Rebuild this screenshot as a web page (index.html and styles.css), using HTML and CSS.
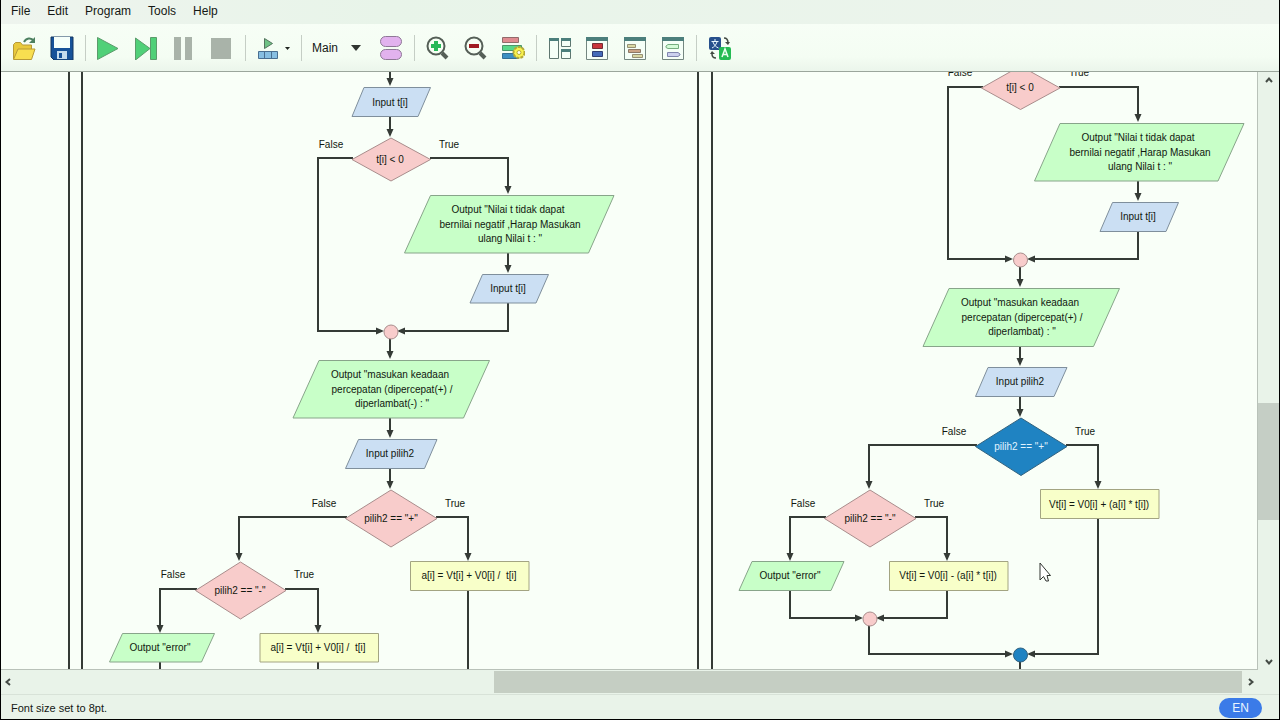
FILE: index.html
```html
<!DOCTYPE html>
<html lang="en">
<head>
<meta charset="utf-8">
<title>Flowchart editor</title>
<link rel="stylesheet" href="styles.css">
</head>
<body>
<div class="app">
  <nav class="menubar">
    <button class="menu">File</button>
    <button class="menu">Edit</button>
    <button class="menu">Program</button>
    <button class="menu">Tools</button>
    <button class="menu">Help</button>
  </nav>

  <div class="toolbar">
    <div class="group">
      <button class="tool" aria-label="Open"><svg viewBox="0 0 24 24"><path d="M1.500 23V8.500l2-2h5l2 2.500h9V14" fill="#e8c93c" stroke="#b89a36"/><path d="M1.500 23.500L6 13h17l-3.500 10.500z" fill="#f8df50" stroke="#b89a36"/><path d="M12 6c2-4 7-5 10-1" fill="none" stroke="#4d8060" stroke-width="2"/><path d="M23 1v6h-6z" fill="#4d8060"/></svg></button>
      <button class="tool" aria-label="Save"><svg viewBox="0 0 24 24"><path d="M1 1h22v23H4l-3-3z" fill="#175299" stroke="#12355f"/><path d="M4 1h16v11H4z" fill="#f6fffa"/><path d="M7 15h10v8H7z" fill="#c5dced"/><path d="M9 17h3v5H9z" fill="#175299"/></svg></button>
    </div>
    <span class="sep"></span>
    <div class="group">
      <button class="tool" aria-label="Run"><svg viewBox="0 0 24 24"><path d="M1.500 1.500v22L22 12.500z" fill="#50d078" stroke="#5b9b6b"/></svg></button>
      <button class="tool" aria-label="Step"><svg viewBox="0 0 24 24"><path d="M1.500 2v22L16 12.500z" fill="#50d078" stroke="#5b9b6b"/><path d="M16.500 1.500h6v22h-6z" fill="#50d078" stroke="#5b9b6b"/></svg></button>
      <button class="tool" aria-label="Pause"><svg viewBox="0 0 24 24"><path d="M2 1h7v23H2zM13 1h7v23h-7z" fill="#a9b3a9"/></svg></button>
      <button class="tool" aria-label="Stop"><svg viewBox="0 0 24 24"><path d="M1 2h20v21H1z" fill="#a9b3a9"/></svg></button>
    </div>
    <span class="sep"></span>
    <button class="tool wide" aria-label="Run speed"><svg viewBox="0 0 34 24"><path d="M8.500 2.500v10l8-5z" fill="#6fc285" stroke="#55745e"/><path d="M2.500 15.500h19v7h-19zM8.500 16v6M15.500 16v6" fill="#87bfe2" stroke="#496f91"/><path d="M29 11h5l-2.500 3z" fill="#202420"/></svg></button>
    <span class="sep"></span>
    <label class="picker">
      <select aria-label="Function"><option>Main</option></select>
      <svg class="picker-arrow" viewBox="0 0 10 6"><path d="M0 0h10L5 6z" fill="#303530"/></svg>
    </label>
    <button class="tool" aria-label="Functions"><svg viewBox="0 0 24 24"><rect x="1.500" y="0.500" width="21" height="10" rx="5" fill="#e2b2ee" stroke="#8e7896"/><rect x="1.500" y="13.500" width="21" height="10" rx="5" fill="#e2b2ee" stroke="#8e7896"/></svg></button>
    <span class="sep"></span>
    <div class="group">
      <button class="tool" aria-label="Zoom in"><svg viewBox="0 0 24 24"><path d="M17 17l5 5" stroke="#555f57" stroke-width="4"/><circle cx="11" cy="10" r="8.500" fill="#f6fff4" stroke="#555f57" stroke-width="2"/><path d="M11 5v10M6 10h10" stroke="#28b958" stroke-width="4"/></svg></button>
      <button class="tool" aria-label="Zoom out"><svg viewBox="0 0 24 24"><path d="M17 17l5 5" stroke="#555f57" stroke-width="4"/><circle cx="11" cy="10" r="8.500" fill="#f6fff4" stroke="#555f57" stroke-width="2"/><path d="M6 10h10" stroke="#a01c22" stroke-width="4"/></svg></button>
      <button class="tool" aria-label="Layout settings"><svg viewBox="0 0 24 24"><path d="M1.500 1.500h16v5h-16z" fill="#df8b90" stroke="#926a6a"/><path d="M1.500 9.500h19v5h-19z" fill="#59d78a" stroke="#4c966a"/><path d="M1.500 17.500h16v5h-16z" fill="#3c8ec2" stroke="#356d94"/><circle cx="18" cy="16.500" r="5.500" fill="#f9f34e" stroke="#b5a936" stroke-width="2" stroke-dasharray="3 1"/><circle cx="18" cy="16.500" r="2" fill="#fffef0" stroke="#b5a936"/></svg></button>
    </div>
    <span class="sep"></span>
    <div class="group">
      <button class="tool" aria-label="Panels"><svg viewBox="0 0 24 24"><path d="M2.500 2.500h9v20h-9zM14.500 2.500h9v8h-9zM14.500 13.500h9v9h-9z" fill="#f5fff7" stroke="#5f7770"/><path d="M2 2h10v3H2zM14 2h10v3H14zM14 13h10v3H14z" fill="#4c7f7c"/></svg></button>
      <button class="tool" aria-label="Variables"><svg viewBox="0 0 24 24"><path d="M1.500 1.500h21v22h-21z" fill="#f5fff7" stroke="#748780"/><path d="M1 1h22v4H1z" fill="#4c7f7c"/><path d="M7.500 7.500h10v5h-10z" fill="#c9343b" stroke="#752e35"/><path d="M7.500 15.500h10v5h-10z" fill="#456bb9" stroke="#303f75"/></svg></button>
      <button class="tool" aria-label="Source code"><svg viewBox="0 0 24 24"><path d="M1.500 1.500h21v22h-21z" fill="#f5fff7" stroke="#748780"/><path d="M1 1h22v4H1z" fill="#4c7f7c"/><path d="M4.500 8.500h8v3h-8z" fill="#d9d8a3" stroke="#969075"/><path d="M5.500 13.500h12v3h-12z" fill="#cca486" stroke="#8d7967"/><path d="M9.500 18.500h10v3h-10z" fill="#d9d8a3" stroke="#969075"/></svg></button>
      <button class="tool" aria-label="Console"><svg viewBox="0 0 24 24"><path d="M1.500 1.500h21v22h-21z" fill="#f5fff7" stroke="#748780"/><path d="M1 1h22v4H1z" fill="#4c7f7c"/><path d="M5 10l2-1.500h10.500v4H7L5 11.500z" fill="#d5fbd8" stroke="#76ad7f"/><path d="M6.500 16.500H17l2 1.500v1l-2 1.500H6.500z" fill="#cbd0ee" stroke="#8085ae"/></svg></button>
    </div>
    <span class="sep"></span>
    <button class="tool" aria-label="Language"><svg viewBox="0 0 24 24"><rect x="2" y="1" width="12" height="13" rx="2" fill="#27508c"/><path d="M8 3v2M4.500 5.500h7M10 6c-1 3-3 5-5 6M6 6c1 3 3 5 5.500 6" fill="none" stroke="#eaf8ff"/><rect x="12" y="11" width="12" height="13" rx="2" fill="#25bb54"/><path d="M15 21l3-8 3 8M16 18.500h4" fill="none" stroke="#eafff0" stroke-width="1.500"/><path d="M17 2c3 0 4 2 4 5M9 22c-3 0-4-1-4-4" fill="none" stroke="#414941" stroke-width="1.500"/><path d="M18 6h5l-2 3zM3 18l2-3 3 3z" fill="#414941"/></svg></button>
  </div>

  <main class="workspace">
    <svg class="chart" role="img" aria-label="Program flowchart">
      <defs>
        <marker id="head" markerUnits="userSpaceOnUse" markerWidth="8" markerHeight="8" refX="6" refY="4" orient="auto"><path d="M0 0.500L8 4L0 7.500z" fill="#353b36"/></marker>
      </defs>
      <g transform="translate(-1 -72)">
        <path class="wire" d="M69 60V680M82 60V680M698 60V680M712 60V680"/>

        <g class="wire flow">
          <path d="M390 60V84"/>
          <path d="M390 117V135"/>
          <path d="M353 158H318V331H382"/>
          <path d="M430 158H508V192"/>
          <path d="M508 253V271"/>
          <path d="M508 303V331H399"/>
          <path d="M390 338V357"/>
          <path d="M390 418V436"/>
          <path d="M390 468V487"/>
          <path d="M347 517H239V559"/>
          <path d="M436 517H468V559"/>
          <path d="M197 589H160V631"/>
          <path d="M285 589H318V631"/>
        </g>
        <path class="wire" d="M160 662V680M318 662V680M468 590V680"/>

        <path class="input" d="M364 87.500H430.500L418 116.500H352z"/>
        <path class="decision" d="M352 159.500L391 138L430.500 159.500L391 181z"/>
        <path class="output" d="M430.500 195.500H614L588.500 253H404.500z"/>
        <path class="input" d="M482.500 274.500H548.500L536 303H470z"/>
        <circle class="decision" cx="391" cy="332" r="7"/>
        <path class="output" d="M319 360.500H489.500L463.500 418H293z"/>
        <path class="input" d="M358.500 439.500H437L424.500 468.500H345.500z"/>
        <path class="decision" d="M345.500 518.500L391 490L437 518.500L391 547z"/>
        <path class="decision" d="M195.500 590.500L240.500 562L286 590.500L240.500 619z"/>
        <path class="assign" d="M410.500 561.500h118.500v29h-118.500z"/>
        <path class="assign" d="M260 633.500h118.500v28.500h-118.500z"/>
        <path class="output" d="M122.500 633.500H214.500L201.500 662H109.500z"/>

        <text x="390" y="106">Input t[i]</text>
        <text x="331" y="148">False</text>
        <text x="449" y="148">True</text>
        <text x="390" y="163">t[i] &lt; 0</text>
        <text x="508" y="213">Output "Nilai t tidak dapat</text>
        <text x="510" y="228">bernilai negatif ,Harap Masukan</text>
        <text x="510" y="242">ulang Nilai t : "</text>
        <text x="508" y="292">Input t[i]</text>
        <text x="390" y="378">Output "masukan keadaan</text>
        <text x="392" y="393">percepatan (dipercepat(+) /</text>
        <text x="392" y="407">diperlambat(-) : "</text>
        <text x="390" y="457">Input pilih2</text>
        <text x="324" y="507">False</text>
        <text x="455" y="507">True</text>
        <text x="391" y="522">pilih2 == "+"</text>
        <text x="469" y="579" xml:space="preserve">a[i] = Vt[i] + V0[i] /  t[i]</text>
        <text x="173" y="578">False</text>
        <text x="304" y="578">True</text>
        <text x="240" y="594">pilih2 == "-"</text>
        <text x="160" y="651">Output "error"</text>
        <text x="318" y="651" xml:space="preserve">a[i] = Vt[i] + V0[i] /  t[i]</text>

        <g class="wire flow">
          <path d="M983 87H948V259H1011"/>
          <path d="M1059 87H1138V120"/>
          <path d="M1138 181V199"/>
          <path d="M1138 231V259H1029"/>
          <path d="M1020 266V285"/>
          <path d="M1020 346V364"/>
          <path d="M1020 396V415"/>
          <path d="M977 445H869V487"/>
          <path d="M1066 445H1098V487"/>
          <path d="M826 517H790V559"/>
          <path d="M915 517H947V559"/>
          <path d="M790 590V618H861"/>
          <path d="M947 590V618H878"/>
          <path d="M869 625V654H1011"/>
          <path d="M1098 518V654H1029"/>
        </g>
        <path class="wire" d="M1020 661V680"/>

        <path class="decision" d="M981.500 88L1020.500 66L1060 88L1020.500 109.500z"/>
        <path class="output" d="M1060 123.500H1244L1218 181H1034.500z"/>
        <path class="input" d="M1112.500 202.500H1178.500L1166 231.500H1100z"/>
        <circle class="decision" cx="1020.500" cy="260" r="7"/>
        <path class="output" d="M949 288.500H1119.500L1093.500 346.500H923z"/>
        <path class="input" d="M988 367.500H1067L1054 396.500H975.500z"/>
        <path class="current" d="M975.500 446.500L1021 418L1067 446.500L1021 475.500z"/>
        <path class="decision" d="M824.500 518.500L870 490L916 518.500L870 547z"/>
        <path class="assign" d="M1040.500 489.500h118.500v29h-118.500z"/>
        <path class="output" d="M752 561.500H844L831 590.500H739z"/>
        <path class="assign" d="M889.500 561.500h118.500v29h-118.500z"/>
        <circle class="decision" cx="870" cy="619" r="7"/>
        <circle class="current" cx="1020.500" cy="655" r="7"/>

        <text x="960" y="76">False</text>
        <text x="1079" y="76">True</text>
        <text x="1020" y="91">t[i] &lt; 0</text>
        <text x="1138" y="141">Output "Nilai t tidak dapat</text>
        <text x="1140" y="156">bernilai negatif ,Harap Masukan</text>
        <text x="1140" y="170">ulang Nilai t : "</text>
        <text x="1138" y="220">Input t[i]</text>
        <text x="1020" y="306">Output "masukan keadaan</text>
        <text x="1022" y="321">percepatan (dipercepat(+) /</text>
        <text x="1022" y="335">diperlambat) : "</text>
        <text x="1020" y="385">Input pilih2</text>
        <text x="954" y="435">False</text>
        <text x="1085" y="435">True</text>
        <text class="on-current" x="1021" y="450">pilih2 == "+"</text>
        <text x="803" y="507">False</text>
        <text x="934" y="507">True</text>
        <text x="870" y="522">pilih2 == "-"</text>
        <text x="1099" y="508">Vt[i] = V0[i] + (a[i] * t[i])</text>
        <text x="790" y="579">Output "error"</text>
        <text x="948" y="579">Vt[i] = V0[i] - (a[i] * t[i])</text>

        <path class="cursor" d="M1040 563V580L1043.500 576.500L1046 581H1048.500L1047 575.500H1050.500z"/>
      </g>
    </svg>
    <div class="vbar">
      <button class="arrow" aria-label="Scroll up"><svg viewBox="0 0 8 8"><path d="M1 6l3-3.500L7 6"/></svg></button>
      <div class="track"><div class="thumb"></div></div>
      <button class="arrow" aria-label="Scroll down"><svg viewBox="0 0 8 8"><path d="M1 2l3 3.500L7 2"/></svg></button>
    </div>
    <div class="hbar">
      <button class="arrow" aria-label="Scroll left"><svg viewBox="0 0 8 8"><path d="M6 1L2.500 4L6 7"/></svg></button>
      <div class="track"><div class="thumb"></div></div>
      <button class="arrow" aria-label="Scroll right"><svg viewBox="0 0 8 8"><path d="M2 1l3.500 3L2 7"/></svg></button>
    </div>
  </main>

  <footer class="status">
    <span>Font size set to 8pt.</span>
    <button class="lang">EN</button>
  </footer>
</div>
</body>
</html>
```
FILE: styles.css
```css
* { box-sizing: border-box; }

body {
  margin: 0;
  font: 12px/16px "Liberation Sans", Arial, sans-serif;
  color: #141814;
}

button, select {
  font: inherit;
  color: inherit;
  background: none;
  border: 0;
  margin: 0;
  padding: 0;
}

svg { display: block; }

.app {
  display: grid;
  grid-template-rows: auto auto 1fr auto;
  height: 100vh;
  border: 1px solid #000;
  border-top: 0;
  background: #e9f3e9;
}

.menubar {
  display: flex;
  gap: 17px;
  padding: 3px 10px 5px;
  background: linear-gradient(90deg, #eef4ee, #e8f4e9 30%, #edf4ed);
}

.toolbar {
  display: flex;
  align-items: center;
  height: 48px;
  padding: 0 11px;
  background: linear-gradient(#f7fef6, #f4fdf3 70%, #ebf5eb);
  border-bottom: 1px solid #9ba69c;
}

.group { display: flex; gap: 14px; }

.tool { width: 24px; height: 24px; }

.tool.wide { width: 34px; }

.tool svg { width: 100%; height: 24px; }

.sep {
  width: 1px;
  height: 26px;
  margin: 0 10px 0 11px;
  background: #c5cec5;
}

.picker {
  display: grid;
  align-items: center;
  width: 49px;
  margin-right: 18px;
}

.picker select {
  grid-area: 1 / 1;
  width: 100%;
  appearance: none;
}

.picker-arrow {
  grid-area: 1 / 1;
  justify-self: end;
  width: 10px;
  height: 6px;
  pointer-events: none;
}

.workspace {
  display: grid;
  grid-template-columns: 1fr 21px;
  grid-template-rows: 1fr 25px;
  min-height: 0;
}

.chart {
  width: 100%;
  height: 100%;
  min-height: 0;
  overflow: hidden;
  background: #f9fff8;
  border-right: 1px solid #b9c2b9;
  border-bottom: 1px solid #b9c2b9;
}

.chart text {
  font-size: 10px;
  text-anchor: middle;
  fill: #10180f;
}

.chart .on-current { fill: #e2f4ff; }

.wire { fill: none; stroke: #353b36; stroke-width: 2; }

.flow path { marker-end: url(#head); }

.input { fill: #cbdff3; stroke: #7f8f9c; }
.output { fill: #c8ffc8; stroke: #88a58a; }
.decision { fill: #f8cccb; stroke: #a98d8c; }
.assign { fill: #f8ffc9; stroke: #a3a482; }
.current { fill: #1f83c2; stroke: #31627f; }
.cursor { fill: #fff; stroke: #303430; }

.arrow {
  display: grid;
  place-items: center;
  flex: none;
}

.arrow svg { width: 8px; height: 8px; }

.arrow path { fill: none; stroke: #444b45; stroke-width: 2; }

.vbar { display: flex; flex-direction: column; }

.vbar .arrow { height: 16px; }

.vbar .track {
  display: grid;
  grid-template-rows: 316fr 117fr 134fr;
  flex: 1;
}

.vbar .thumb { grid-row: 2; background: #c5cec5; }

.hbar {
  grid-column: 1 / -1;
  display: flex;
  padding: 1px 19px 1px 0;
  border-bottom: 1px solid #d8e2d8;
}

.hbar .arrow { width: 14px; }

.hbar .arrow:last-child { width: 18px; }

.hbar .track {
  display: grid;
  grid-template-columns: 479fr 747fr;
  flex: 1;
}

.hbar .thumb { grid-column: 2; background: #c5cec3; }

.status {
  display: flex;
  justify-content: space-between;
  align-items: center;
  height: 24px;
  padding: 2px 17px 0 10px;
  font-size: 11px;
}

.lang {
  width: 43px;
  height: 20px;
  border-radius: 10px;
  background: #3b7be8;
  color: #e9f5ff;
  font-size: 12px;
}
```
